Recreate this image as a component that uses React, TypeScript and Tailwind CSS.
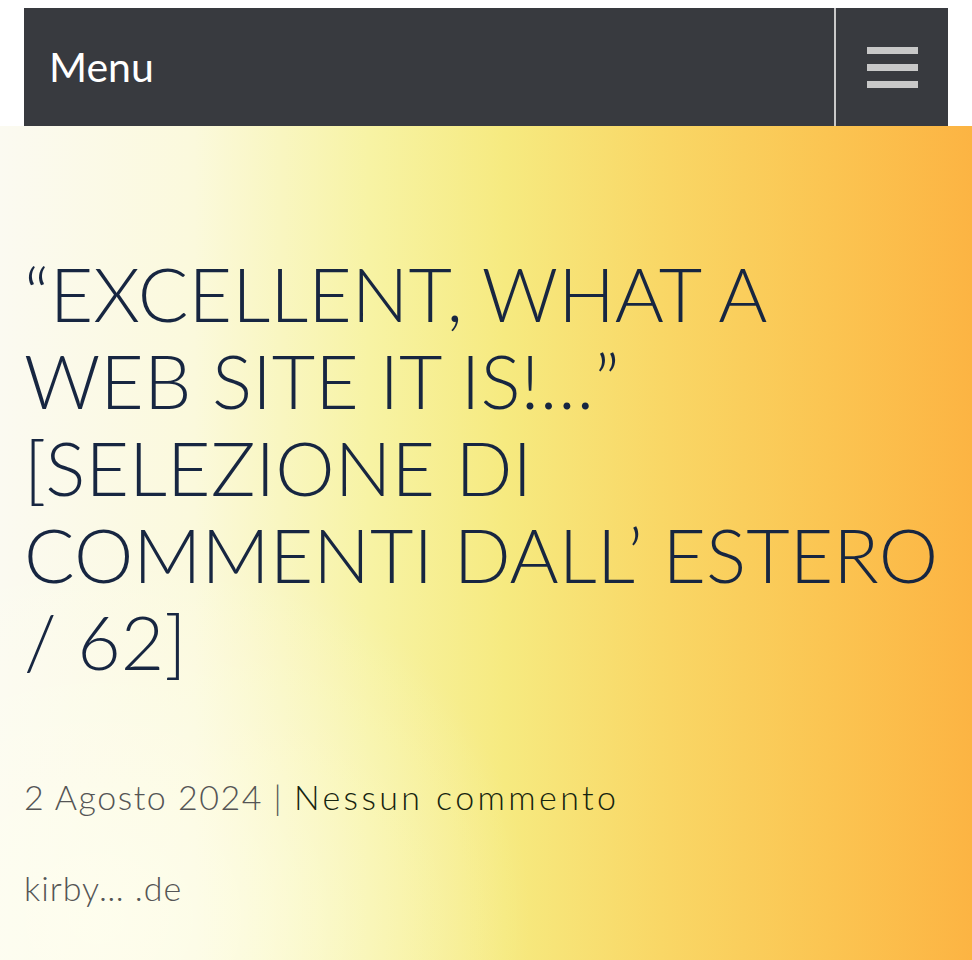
const App = () => {
    return (
        <div className="w-full h-[960px] bg-white overflow-hidden" style={{ fontFamily: 'Lato, "Open Sans", sans-serif' }}>
            {/* top nav */}
            <div className="px-6 pt-2">
                <div className="h-[118px] bg-[#383a3f] flex">
                    <div className="flex-1 flex items-center pl-[25px]">
                        <span className="text-[41px] text-white font-normal">Menu</span>
                    </div>
                    <div className="w-[2px] bg-[#c9c9c9]" />
                    <div className="w-[112px] flex flex-col items-center justify-center gap-[10px]">
                        <span className="block w-[51px] h-[7px] bg-[#c8c8c8]" />
                        <span className="block w-[51px] h-[7px] bg-[#c8c8c8]" />
                        <span className="block w-[51px] h-[7px] bg-[#c8c8c8]" />
                    </div>
                </div>
            </div>

            {/* hero */}
            <div className="relative h-[834px] bg-[linear-gradient(90deg,#fbfaf1_0%,#fbf9dc_20%,#f7f3a4_38%,#f6ea80_52%,#f9d766_68%,#fbc552_85%,#fcb443_100%)]">
                <div className="absolute inset-0 bg-[radial-gradient(ellipse_at_10%_95%,rgba(255,255,240,0.75)_0%,rgba(255,255,240,0)_35%)]" />
                <div className="relative px-6 pt-[124px]">
                    <h1 className="text-[75px] leading-[87px] font-light text-[#172641] whitespace-nowrap tracking-[0.1px]">
                        “EXCELLENT, WHAT A<br />
                        WEB SITE IT IS!…”<br />
                        [SELEZIONE DI<br />
                        COMMENTI DALL’ ESTERO<br />
                        / 62]
                    </h1>
                    <p className="mt-[86px] text-[34px] font-light text-[#555555] whitespace-nowrap tracking-[1.5px]">
                        2 Agosto 2024 | <span className="text-[#16240f] tracking-[3.4px]">Nessun commento</span>
                    </p>
                    <p className="mt-[40px] text-[34px] font-light text-[#555555] tracking-[1px]">kirby… .de</p>
                </div>
            </div>
        </div>
    )
}

export default App
